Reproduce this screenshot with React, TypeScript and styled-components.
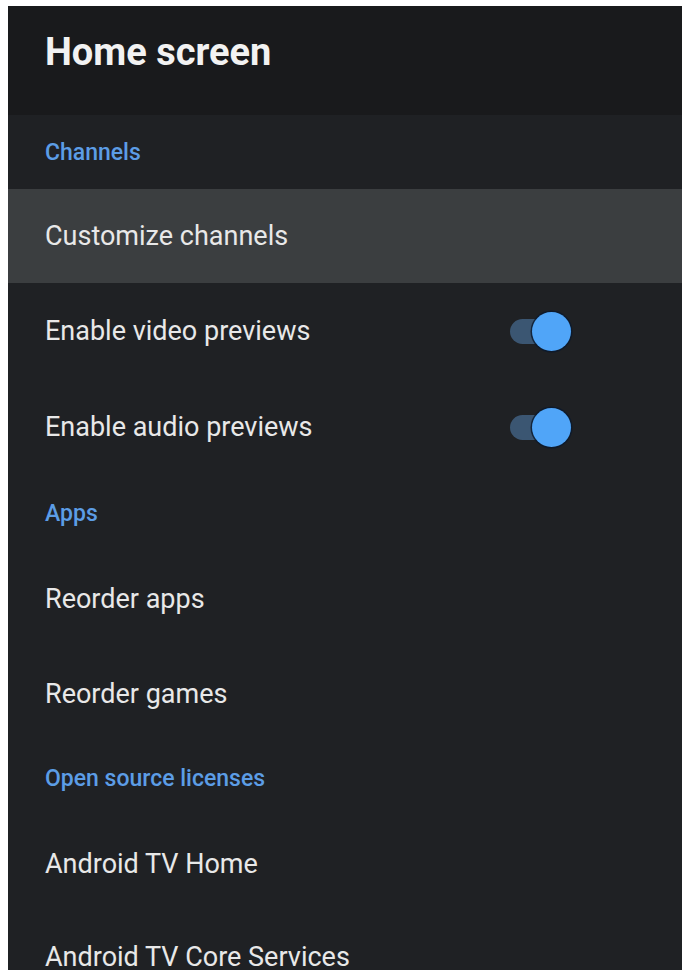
import React from "react";
import styled, { createGlobalStyle } from "styled-components";

const GlobalStyle = createGlobalStyle`
  html, body {
    margin: 0;
    padding: 0;
    background: #ffffff;
  }
  body {
    font-family: Roboto, "Noto Sans", "Liberation Sans", sans-serif;
    -webkit-font-smoothing: antialiased;
  }
`;

const Page = styled.div`
  height: 970px;
  padding: 6px 5px 0 8px;
  box-sizing: border-box;
  overflow: hidden;
`;

const Panel = styled.div`
  height: 964px;
  background: #1f2124;
  overflow: hidden;
  display: flex;
  flex-direction: column;
`;

const Header = styled.header`
  flex: 0 0 auto;
  height: 109px;
  box-sizing: border-box;
  padding: 27px 0 0 37px;
  background: #191a1c;
`;

const Title = styled.h1`
  margin: 0;
  font-size: 38px;
  line-height: 38px;
  font-weight: 700;
  color: #f2f2f2;
`;

const SectionLabel = styled.div<{ $h: number }>`
  flex: 0 0 auto;
  height: ${(p) => p.$h}px;
  display: flex;
  align-items: center;
  padding-left: 37px;
  font-size: 23px;
  font-weight: 500;
  color: #5c9de6;
`;

const Row = styled.div<{ $h: number; $active?: boolean }>`
  flex: 0 0 auto;
  height: ${(p) => p.$h}px;
  display: flex;
  align-items: center;
  justify-content: space-between;
  padding: 0 111px 0 37px;
  background: ${(p) => (p.$active ? "#3b3e40" : "transparent")};
`;

const RowText = styled.span`
  font-size: 27px;
  font-weight: 400;
  color: #e8e8e8;
  white-space: nowrap;
`;

const Switch = styled.div`
  position: relative;
  width: 61px;
  height: 39px;
  flex: 0 0 auto;
`;

const Track = styled.div`
  position: absolute;
  left: 0;
  top: 7px;
  width: 52px;
  height: 25px;
  border-radius: 13px;
  background: #3b5672;
`;

const Thumb = styled.div`
  position: absolute;
  right: 0;
  top: 0;
  width: 39px;
  height: 39px;
  border-radius: 50%;
  background: #50a5f8;
  box-shadow: 0 0 0 1.5px rgba(10, 25, 45, 0.8);
`;

const Toggle = () => (
  <Switch>
    <Track />
    <Thumb />
  </Switch>
);

export default function App() {
  return (
    <>
      <GlobalStyle />
      <Page>
        <Panel>
          <Header>
            <Title>Home screen</Title>
          </Header>
          <SectionLabel $h={74}>Channels</SectionLabel>
          <Row $h={94} $active>
            <RowText>Customize channels</RowText>
          </Row>
          <Row $h={96}>
            <RowText>Enable video previews</RowText>
            <Toggle />
          </Row>
          <Row $h={96}>
            <RowText>Enable audio previews</RowText>
            <Toggle />
          </Row>
          <SectionLabel $h={76}>Apps</SectionLabel>
          <Row $h={96}>
            <RowText>Reorder apps</RowText>
          </Row>
          <Row $h={94}>
            <RowText>Reorder games</RowText>
          </Row>
          <SectionLabel $h={74}>Open source licenses</SectionLabel>
          <Row $h={98}>
            <RowText>Android TV Home</RowText>
          </Row>
          <Row $h={88}>
            <RowText>Android TV Core Services</RowText>
          </Row>
        </Panel>
      </Page>
    </>
  );
}
